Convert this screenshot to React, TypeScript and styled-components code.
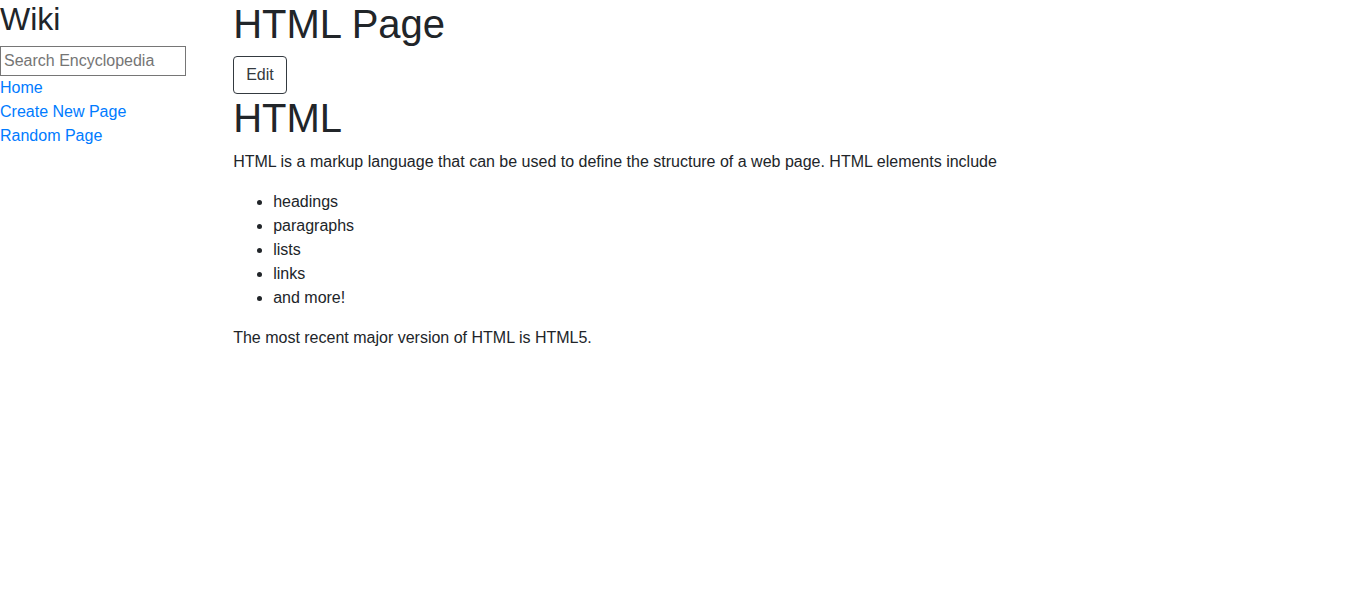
import React from "react";
import styled, { createGlobalStyle } from "styled-components";

const GlobalStyle = createGlobalStyle`
  *, *::before, *::after { box-sizing: border-box; }
  html, body { margin: 0; padding: 0; }
  body {
    font-family: "Liberation Sans", Arial, sans-serif;
    font-size: 16px;
    line-height: 1.5;
    color: #212529;
    background: #fff;
  }
`;

const Row = styled.div`
  display: flex;
  margin: 0 -15px;
  width: calc(100% + 30px);
`;

const Sidebar = styled.nav`
  flex: 0 0 16.6667%;
  max-width: 16.6667%;
  padding: 0 15px;
`;

const Main = styled.main`
  flex: 0 0 83.3333%;
  max-width: 83.3333%;
  padding: 0 15px 0 16px;
`;

const SiteTitle = styled.h2`
  margin: 0 0 8px;
  font-size: 32px;
  font-weight: 500;
  line-height: 1.2;
`;

const SearchForm = styled.form`
  margin: 0;
`;

const SearchInput = styled.input`
  display: block;
  width: 186px;
  height: 30px;
  margin: 0;
  padding: 1px 3px;
  border: 1px solid #767676;
  border-radius: 0;
  font-family: inherit;
  font-size: 16px;
  line-height: 24px;
  color: #212529;
  background: #fff;
  &::placeholder { color: #757575; opacity: 1; }
`;

const NavLink = styled.a`
  display: block;
  color: #007bff;
  text-decoration: none;
  line-height: 24px;
`;

const PageTitle = styled.h1`
  margin: 0 0 8px;
  font-size: 40px;
  font-weight: 500;
  line-height: 1.2;
`;

const EditButton = styled.button`
  display: block;
  height: 38px;
  margin: 0;
  padding: 6px 12px;
  border: 1px solid #343a40;
  border-radius: 4px;
  background: transparent;
  color: #343a40;
  font-family: inherit;
  font-size: 16px;
  line-height: 24px;
  cursor: pointer;
`;

const Paragraph = styled.p`
  margin: 0 0 16px;
`;

const List = styled.ul`
  margin: 0 0 16px;
  padding-left: 40px;
`;

const topics = ["headings", "paragraphs", "lists", "links", "and more!"];

export default function App() {
  return (
    <>
      <GlobalStyle />
      <Row>
        <Sidebar>
          <SiteTitle>Wiki</SiteTitle>
          <SearchForm onSubmit={(e) => e.preventDefault()}>
            <SearchInput type="text" name="q" placeholder="Search Encyclopedia" />
          </SearchForm>
          <NavLink href="#">Home</NavLink>
          <NavLink href="#">Create New Page</NavLink>
          <NavLink href="#">Random Page</NavLink>
        </Sidebar>
        <Main>
          <PageTitle>HTML Page</PageTitle>
          <EditButton type="button">Edit</EditButton>
          <PageTitle>HTML</PageTitle>
          <Paragraph>
            HTML is a markup language that can be used to define the structure of a web page. HTML elements include
          </Paragraph>
          <List>
            {topics.map((t) => (
              <li key={t}>{t}</li>
            ))}
          </List>
          <Paragraph>The most recent major version of HTML is HTML5.</Paragraph>
        </Main>
      </Row>
    </>
  );
}
